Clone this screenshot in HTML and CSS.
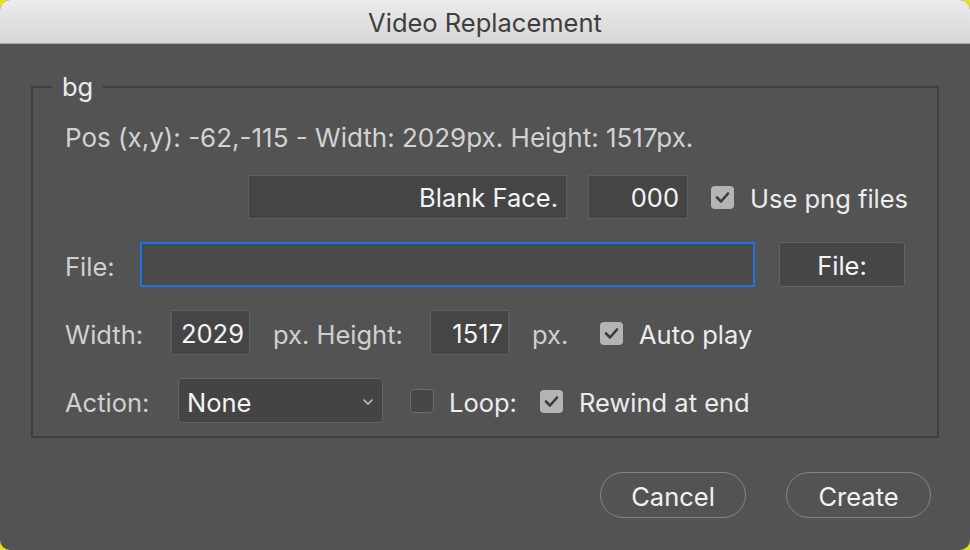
FILE: index.html
```html
<!DOCTYPE html>
<html>
<head>
<meta charset="utf-8">
<link rel="stylesheet" href="styles.css">
</head>
<body>
<div class="window">
  <div class="titlebar">Video Replacement</div>
  <div class="content">
    <fieldset class="group">
      <legend class="legend">bg</legend>
      <div class="pos">Pos (x,y): -62,-115 - Width: 2029px. Height: 1517px.</div>

      <div class="row row-face">
        <div class="field face">Blank Face.</div>
        <div class="field num">000</div>
        <span class="check on"><svg viewBox="0 0 23 23"><path d="M6 11.5 L10 15.5 L17 7.5" fill="none" stroke="#3c3c3c" stroke-width="2.6" stroke-linecap="round" stroke-linejoin="round"/></svg></span>
        <span class="ctext">Use png files</span>
      </div>

      <div class="row">
        <span class="label lbl-file">File:</span>
        <div class="field fileinput"></div>
        <div class="btn-file">File:</div>
      </div>

      <div class="row">
        <span class="label lbl-width">Width:</span>
        <div class="field size">2029</div>
        <span class="label lbl-height">px. Height:</span>
        <div class="field size">1517</div>
        <span class="label lbl-px">px.</span>
        <span class="check on"><svg viewBox="0 0 23 23"><path d="M6 11.5 L10 15.5 L17 7.5" fill="none" stroke="#3c3c3c" stroke-width="2.6" stroke-linecap="round" stroke-linejoin="round"/></svg></span>
        <span class="ctext">Auto play</span>
      </div>

      <div class="row">
        <span class="label lbl-action">Action:</span>
        <div class="select"><span>None</span><svg class="chev" viewBox="0 0 10 6"><path d="M1 1 L5 5 L9 1" fill="none" stroke="#d0d0d0" stroke-width="1.4" stroke-linecap="round" stroke-linejoin="round"/></svg></div>
        <span class="check off"></span>
        <span class="ctext loop">Loop:</span>
        <span class="check on"><svg viewBox="0 0 23 23"><path d="M6 11.5 L10 15.5 L17 7.5" fill="none" stroke="#3c3c3c" stroke-width="2.6" stroke-linecap="round" stroke-linejoin="round"/></svg></span>
        <span class="ctext">Rewind at end</span>
      </div>
    </fieldset>

    <div class="actions">
      <button class="pill cancel">Cancel</button>
      <button class="pill create">Create</button>
    </div>
  </div>
</div>
</body>
</html>
```
FILE: styles.css
```css
* { box-sizing: border-box; }
html, body { margin: 0; padding: 0; }
body {
  background: #e8e21c;
  font-family: Inter, "Noto Sans", "Liberation Sans", sans-serif;
  width: 970px;
  height: 550px;
  overflow: hidden;
}
.window {
  width: 970px;
  height: 550px;
  border-radius: 10px;
  overflow: hidden;
  background: #535353;
  display: flex;
  flex-direction: column;
}
.titlebar {
  height: 44px;
  flex: none;
  background: linear-gradient(#ececec, #d6d6d6);
  border-bottom: 1px solid #a8a8a8;
  color: #3e3e3e;
  font-size: 25.5px;
  line-height: 45px;
  text-align: center;
}
.content {
  padding: 29px 31px 0 31px;
  display: flex;
  flex-direction: column;
}
.group {
  margin: 0;
  border: 2px solid #3f3f3f;
  padding: 0 30px 13px 32px;
  min-width: 0;
}
.legend {
  margin-left: -13px;
  padding: 0 10px;
  font-size: 25.5px;
  line-height: 28px;
  color: #ececec;
}
.pos {
  margin-top: 22px;
  height: 28px;
  line-height: 30px;
  font-size: 26px;
  color: #d2d2d2;
  white-space: nowrap;
}
.row {
  display: flex;
  align-items: center;
  margin-top: 23px;
  height: 45px;
  white-space: nowrap;
}
.row-face {
  margin-top: 24px;
  height: 44px;
  padding-left: 183px;
}
.field {
  height: 44px;
  background: #454545;
  border: 1.5px solid #5f5f5f;
  color: #f4f4f4;
  font-size: 25.5px;
  line-height: 44px;
  text-align: right;
  padding-right: 8px;
  flex: none;
}
.face { width: 319px; margin-right: 21px; }
.num { width: 100px; margin-right: 23px; }
.size { width: 79px; height: 45px; line-height: 45px; padding-right: 5px; }
.fileinput {
  width: 615px;
  height: 45px;
  background: #4b4b4b;
  border: 2px solid #1f72e4;
  box-shadow: inset 2px 2px 0 #474747;
  margin-right: 24px;
}
.btn-file {
  width: 126px;
  height: 45px;
  background: #464646;
  border: 1.5px solid #636363;
  border-radius: 3px;
  color: #f4f4f4;
  font-size: 25.5px;
  line-height: 45px;
  text-align: center;
  flex: none;
}
.label {
  font-size: 25.5px;
  color: #d0d0d0;
  flex: none;
  padding-top: 3px;
}
.lbl-file { width: 75px; }
.lbl-width { width: 106px; }
.lbl-height { width: 180px; padding-left: 23px; }
.lbl-px { width: 91px; padding-left: 23px; }
.lbl-action { width: 113px; }
.check {
  width: 23px;
  height: 23px;
  border-radius: 4px;
  flex: none;
  margin-right: 16px;
  display: inline-flex;
  margin-top: 1px;
}
.check svg { width: 23px; height: 23px; }
.check.on { background: #b4b4b4; }
.check.off {
  background: #464646;
  border: 1.5px solid #6e6e6e;
  width: 24px;
  height: 24px;
  margin-right: 15px;
}
.ctext {
  font-size: 25.5px;
  color: #ececec;
  flex: none;
  padding-top: 3px;
}
.loop { width: 91px; }
.select {
  width: 205px;
  height: 45px;
  flex: none;
  background: #444444;
  border: 1.5px solid #636363;
  border-radius: 4px;
  margin-right: 27px;
  display: flex;
  align-items: center;
  justify-content: space-between;
  padding: 3px 9px 0 8px;
  font-size: 25.5px;
  color: #f4f4f4;
}
.chev { width: 10px; height: 6px; }
.actions {
  display: flex;
  justify-content: flex-end;
  gap: 40px;
  margin-top: 34px;
  padding-right: 8px;
}
.pill {
  height: 46px;
  border-radius: 23px;
  border: 1.5px solid #858585;
  background: transparent;
  color: #f2f2f2;
  font-family: inherit;
  font-size: 25.5px;
  padding: 2px 0 0 0;
}
.cancel { width: 146px; }
.create { width: 145px; }
```
